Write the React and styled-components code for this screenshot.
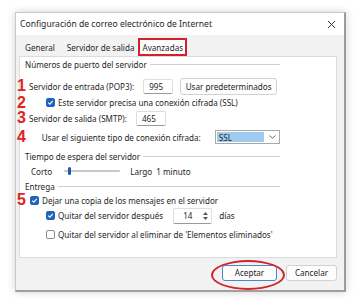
import React from 'react'
import styled, { createGlobalStyle } from 'styled-components'

const Global = createGlobalStyle`
  html, body { margin: 0; padding: 0; background: #fff; }
  body { font-family: "Noto Sans", "DejaVu Sans", sans-serif; color: #262626; }
`

const Page = styled.div`
  width: 364px;
  height: 305px;
  padding: 12px 18px 13px 15px;
  box-sizing: border-box;
`

const Dialog = styled.div`
  position: relative;
  height: 100%;
  display: flex;
  flex-direction: column;
  background: #f2f2f2;
  border: 1px solid #c9c9c9;
  border-right: 2px solid #9c9c9c;
  border-bottom: 2px solid #a0a0a0;
  box-shadow: 0 0 8px rgba(0, 0, 0, 0.18);
  box-sizing: border-box;
`

const TitleBar = styled.div`
  height: 22px;
  display: flex;
  align-items: center;
  justify-content: space-between;
  padding: 0 8px 0 4px;
  background: #fff;
  font-size: 8.6px;
`

const Tabs = styled.div`
  display: flex;
  align-items: flex-end;
  height: 21px;
  padding-left: 5px;
`

const Tab = styled.div`
  height: 18px;
  display: flex;
  align-items: center;
  padding: 0 2px;
  font-size: 8.1px;
  box-sizing: border-box;
  background: ${p => (p.$active ? '#fff' : 'transparent')};
  border: ${p => (p.$active ? '2px solid #d3212b' : '2px solid transparent')};
  margin-left: ${p => p.$ml || 0}px;
`

const Panel = styled.div`
  margin: 0 7px 0 3px;
  height: 202px;
  background: #fff;
  border: 1px solid #dcdcdc;
  box-sizing: border-box;
  padding-right: 56px;
`

const Group = styled.div`
  display: flex;
  align-items: center;
  height: 12px;
  margin-top: ${p => p.$mt || 0}px;
  padding-left: 5px;
  font-size: 8.1px;
  &::after {
    content: '';
    flex: 1;
    height: 1px;
    margin-left: 3px;
    background: #cfcfcf;
  }
`

const Row = styled.div`
  display: flex;
  align-items: center;
  height: ${p => p.$h || 16}px;
  margin-top: ${p => p.$mt || 0}px;
  padding-left: ${p => p.$pl || 0}px;
  font-size: 8.1px;
  white-space: nowrap;
`

const Num = styled.span`
  width: 12px;
  margin-left: -3px;
  margin-right: ${p => p.$mr || 0}px;
  font-family: "Liberation Sans", Arial, sans-serif;
  font-weight: bold;
  font-size: 16px;
  line-height: 1;
  color: #e0231c;
`

const Field = styled.div`
  width: ${p => p.$w}px;
  height: 15px;
  margin-left: ${p => p.$ml || 0}px;
  display: flex;
  align-items: center;
  padding-left: 5px;
  box-sizing: border-box;
  border: 1px solid #dedede;
  border-bottom-color: #9a9a9a;
  border-radius: 2px;
  background: #fff;
`

const Button = styled.div`
  height: ${p => p.$h || 16}px;
  width: ${p => p.$w}px;
  margin-left: ${p => p.$ml || 0}px;
  display: flex;
  align-items: center;
  justify-content: center;
  box-sizing: border-box;
  border: 1px solid ${p => (p.$primary ? '#4a86c8' : '#d2d2d2')};
  border-radius: 3px;
  background: #fdfdfd;
  font-size: 8.1px;
`

const Check = styled.span`
  width: 9px;
  height: 9px;
  margin-right: 3px;
  box-sizing: border-box;
  border-radius: 2px;
  display: inline-flex;
  align-items: center;
  justify-content: center;
  background: ${p => (p.$on ? '#1f64c0' : '#fff')};
  border: 1px solid ${p => (p.$on ? '#1f64c0' : '#8a8a8a')};
`

const Select = styled.div`
  width: 67px;
  height: 14px;
  margin-left: 14px;
  display: flex;
  box-sizing: border-box;
  border: 1px solid #a9a9a9;
  background: #fff;
`

const SelectValue = styled.div`
  flex: 1;
  margin: 1px;
  padding-left: 2px;
  display: flex;
  align-items: center;
  background: #9fcbf1;
`

const SelectArrow = styled.div`
  width: 14px;
  display: flex;
  align-items: center;
  justify-content: center;
`

const Track = styled.div`
  position: relative;
  width: 56px;
  height: 2px;
  margin: 0 10px 0 12px;
  background: #c8c8c8;
  border-radius: 1px;
`

const Thumb = styled.span`
  position: absolute;
  left: 4px;
  top: -3px;
  width: 3px;
  height: 8px;
  border-radius: 2px;
  background: #1c5cb0;
`

const Spin = styled.div`
  width: 39px;
  height: 16px;
  margin-left: 10px;
  margin-right: 7px;
  display: flex;
  align-items: center;
  box-sizing: border-box;
  border: 1px solid #dedede;
  border-bottom-color: #9a9a9a;
  border-radius: 2px;
  background: #fff;
  padding-left: 9px;
`

const SpinArrows = styled.div`
  margin-left: auto;
  margin-right: 2px;
  width: 8px;
  display: flex;
  flex-direction: column;
  align-items: center;
  gap: 2px;
`

const Footer = styled.div`
  flex: 1;
  display: flex;
  align-items: center;
  justify-content: flex-end;
  gap: 9px;
  padding-right: 7px;
  padding-bottom: 3px;
`

const Ring = styled.div`
  position: absolute;
  left: 195px;
  top: 247px;
  width: 74px;
  height: 30px;
  border: 2.5px solid #d0242b;
  border-radius: 50%;
  box-sizing: border-box;
`

const Tick = () => (
  <svg width="7" height="7" viewBox="0 0 7 7">
    <path d="M1.2 3.6 L2.8 5.1 L5.8 1.8" fill="none" stroke="#fff" strokeWidth="1.1" />
  </svg>
)

export default function App() {
  return (
    <Page>
      <Global />
      <Dialog>
        <TitleBar>
          <span>Configuración de correo electrónico de Internet</span>
          <svg width="9" height="9" viewBox="0 0 9 9">
            <path d="M1 1 L8 8 M8 1 L1 8" stroke="#333" strokeWidth="1" />
          </svg>
        </TitleBar>
        <Tabs>
          <Tab>General</Tab>
          <Tab $ml={4}>Servidor de salida</Tab>
          <Tab $active>Avanzadas</Tab>
        </Tabs>
        <Panel>
          <Group $mt={1}>Números de puerto del servidor</Group>
          <Row $h={18} $mt={7}>
            <Num>1</Num>
            Servidor de entrada (POP3):
            <Field $w={30} $ml={9}>995</Field>
            <Button $w={97} $h={17} $ml={7}>Usar predeterminados</Button>
          </Row>
          <Row $h={15}>
            <Num $mr={17}>2</Num>
            <Check $on><Tick /></Check>
            Este servidor precisa una conexión cifrada (SSL)
          </Row>
          <Row $h={16}>
            <Num>3</Num>
            Servidor de salida (SMTP):
            <Field $w={30} $ml={9}>465</Field>
          </Row>
          <Row $h={18} $mt={2}>
            <Num $mr={13}>4</Num>
            Usar el siguiente tipo de conexión cifrada:
            <Select>
              <SelectValue>SSL</SelectValue>
              <SelectArrow>
                <svg width="7" height="4" viewBox="0 0 7 4">
                  <path d="M0.5 0.5 L3.5 3.3 L6.5 0.5" fill="none" stroke="#555" strokeWidth="0.9" />
                </svg>
              </SelectArrow>
            </Select>
          </Row>
          <Group $mt={4}>Tiempo de espera del servidor</Group>
          <Row $h={14} $mt={2} $pl={11}>
            Corto
            <Track><Thumb /></Track>
            Largo&nbsp;&nbsp;1 minuto
          </Row>
          <Group $mt={2}>Entrega</Group>
          <Row $h={16}>
            <Num $mr={1}>5</Num>
            <Check $on><Tick /></Check>
            Dejar una copia de los mensajes en el servidor
          </Row>
          <Row $h={15} $pl={26}>
            <Check $on><Tick /></Check>
            Quitar del servidor después
            <Spin>
              14
              <SpinArrows>
                <svg width="5" height="3" viewBox="0 0 5 3"><path d="M0 3 L2.5 0 L5 3Z" fill="#555" /></svg>
                <svg width="5" height="3" viewBox="0 0 5 3"><path d="M0 0 L2.5 3 L5 0Z" fill="#555" /></svg>
              </SpinArrows>
            </Spin>
            días
          </Row>
          <Row $h={14} $mt={4} $pl={26}>
            <Check />
            Quitar del servidor al eliminar de 'Elementos eliminados'
          </Row>
        </Panel>
        <Footer>
          <Button $primary $w={55} $h={16}>Aceptar</Button>
          <Button $w={51} $h={16}>Cancelar</Button>
        </Footer>
        <Ring />
      </Dialog>
    </Page>
  )
}
